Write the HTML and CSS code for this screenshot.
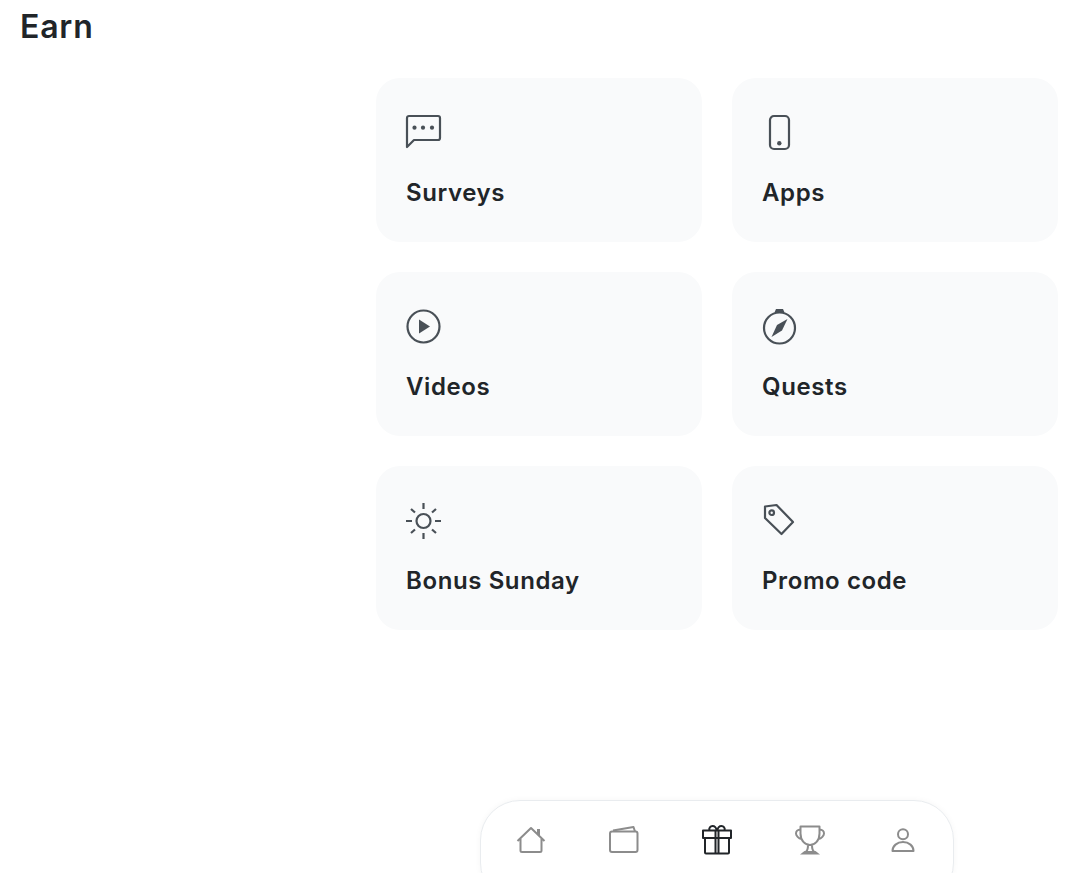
FILE: index.html
```html
<!DOCTYPE html>
<html lang="en">
<head>
  <meta charset="UTF-8" />
  <meta name="viewport" content="width=device-width, initial-scale=1.0"/>
  <title>Earn</title>
  <link rel="stylesheet" href="styles.css">
</head>
<body>
  <h1 class="page-title">Earn</h1>

  <main class="earn-grid">
    <a class="card">
      <svg class="card-icon" viewBox="0 0 36 36">
        <path d="M1 3a2 2 0 0 1 2-2h29a2 2 0 0 1 2 2v20a2 2 0 0 1-2 2H8l-7 7z"/>
        <circle class="dot" cx="8.500" cy="12.700" r="2.100"/><circle class="dot" cx="17" cy="12.700" r="2.100"/><circle class="dot" cx="26" cy="12.700" r="2.100"/>
      </svg>
      <span class="card-label">Surveys</span>
    </a>
    <a class="card">
      <svg class="card-icon" viewBox="0 0 36 36">
        <rect x="8" y="1" width="19" height="33" rx="4"/>
        <circle class="dot" cx="17.300" cy="28.300" r="2.200"/>
      </svg>
      <span class="card-label">Apps</span>
    </a>
    <a class="card">
      <svg class="card-icon" viewBox="0 0 36 36">
        <circle cx="17.500" cy="17.500" r="16"/>
        <path class="dot" d="M13 10.500 24 17.500 13 24.500z"/>
      </svg>
      <span class="card-label">Videos</span>
    </a>
    <a class="card">
      <svg class="card-icon" viewBox="0 0 36 36">
        <circle cx="17.500" cy="19" r="15.500"/>
        <path class="dot" d="M14 0h7l1.500 3.500h-10z"/>
        <path class="dot" d="M25.500 10 20 21.500 9.500 28 15 16z"/>
      </svg>
      <span class="card-label">Quests</span>
    </a>
    <a class="card">
      <svg class="card-icon" viewBox="0 0 36 36">
        <circle cx="17.500" cy="18" r="7"/>
        <path d="M17.500 0v6M17.500 30v6M0 18h6M29 18h6M5 6l4 3.500M26 26.500l4 3.500M5 30l4-3.500M26 9.500 30 6"/>
      </svg>
      <span class="card-label">Bonus Sunday</span>
    </a>
    <a class="card">
      <svg class="card-icon" viewBox="0 0 36 36">
        <path d="M3 3.500 14.500 2 31 19 19.500 31 3 15z"/>
        <circle cx="9.700" cy="9.700" r="2.300"/>
      </svg>
      <span class="card-label">Promo code</span>
    </a>
  </main>

  <nav class="bottom-nav">
    <svg class="nav-icon" viewBox="0 0 30 30">
      <path d="M1.500 16 15 3 28.500 16M4.500 13v12.500a1.500 1.500 0 0 0 1.500 1.500h18a1.500 1.500 0 0 0 1.500-1.500V13"/>
      <path class="solid" d="M21 4h3v8l-3-3z"/>
    </svg>
    <svg class="nav-icon" viewBox="0 0 30 30">
      <rect x="1" y="6.500" width="27.500" height="20.500" rx="2"/>
      <path d="M4 5.500 24.500 2 26 6.500"/>
    </svg>
    <svg class="nav-icon active" viewBox="0 0 30 30">
      <path d="M1 5.500h28V13H1zM3 13v14.500a1 1 0 0 0 1 1h22a1 1 0 0 0 1-1V13M13.500 5.500v23M16.500 5.500v23"/>
      <path d="M14.500 5.500c0-3-2-4.500-4-4.500s-4 2-3 4.500M15.500 5.500c0-3 2-4.500 4-4.500s4 2 3 4.500"/>
    </svg>
    <svg class="nav-icon" viewBox="0 0 30 30">
      <path d="M5.500 1.500h19v7c0 7-4.500 11.500-9.500 11.500S5.500 15.500 5.500 8.500zM5.500 4.500C2.500 4.500 1 6.500 1 8.500s2.500 5 5.500 5.500M24.500 4.500c3 0 4.500 2 4.500 4s-2.500 5-5.500 5.500M13 20c0 3 0 5-2 6.500M17 20c0 3 0 5 2 6.500"/>
      <path class="solid" d="M9.500 26h11l4.500 3.500H5z"/>
    </svg>
    <svg class="nav-icon" viewBox="0 0 30 30">
      <circle cx="15" cy="9.300" r="5"/>
      <path d="M4.500 26c0-5 4.500-9 10.500-9s10.500 4 10.500 9z"/>
    </svg>
  </nav>
</body>
</html>
```

FILE: styles.css
```css
* { box-sizing: border-box; }
html, body { height: 100%; }
body {
  margin: 0;
  background: #fff;
  color: #212529;
  font-family: Inter, "Noto Sans", sans-serif;
  overflow: hidden;
}
.page-title {
  margin: 0; padding: 8px 20px 0;
  font-size: 32px; line-height: 38px; font-weight: 600; letter-spacing: 0.8px;
}
.earn-grid {
  display: grid; grid-template-columns: 326px 326px; gap: 30px;
  margin: 32px 0 0 376px;
}
.card {
  display: flex; flex-direction: column; align-items: flex-start;
  height: 164px; padding: 37px 30px 0;
  background: #f9fafb; border-radius: 24px;
}
.card-icon {
  width: 36px; height: 36px; overflow: visible;
  fill: none; stroke: #495057; stroke-width: 2.2; stroke-linejoin: round;
}
.card-icon .dot { fill: #495057; stroke: none; }
.card-label {
  margin-top: 26px;
  font-size: 24px; line-height: 32px; font-weight: 600; letter-spacing: 0.6px;
}
.bottom-nav {
  position: fixed; left: 480px; bottom: -30px;
  width: 474px; height: 103px; padding: 24px 0 0 35px;
  display: flex; gap: 63px; align-items: flex-start;
  background: #fff;
  border: 1px solid #e9ecef; border-radius: 40px;
  box-shadow: 0 0 6px rgba(0,0,0,0.04);
}
.nav-icon {
  width: 30px; height: 30px; flex: none;
  fill: none; stroke: #8c8c8c; stroke-width: 2; stroke-linejoin: round;
}
.nav-icon .solid { fill: #8c8c8c; stroke: none; }
.nav-icon.active { stroke: #212529; }
```
